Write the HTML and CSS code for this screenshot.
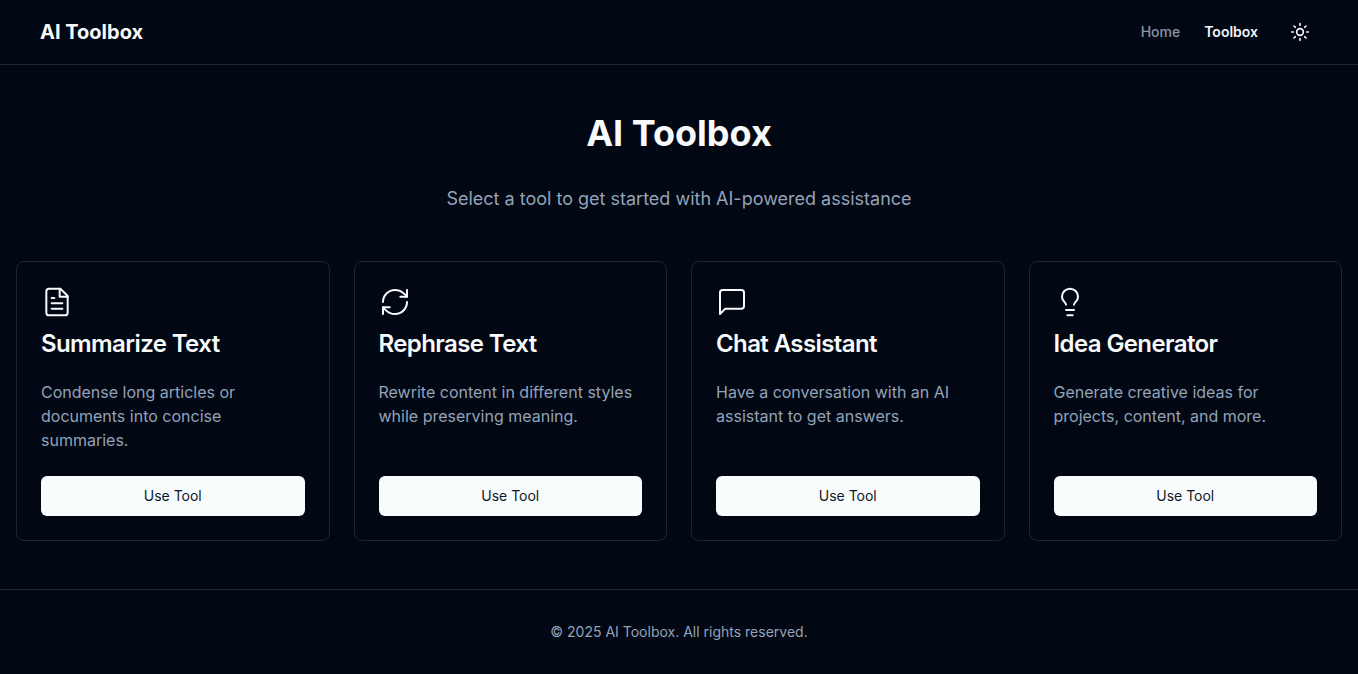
FILE: index.html
```html
<!DOCTYPE html>
<html lang="en">
<head>
<meta charset="utf-8">
<meta name="viewport" content="width=device-width, initial-scale=1">
<title>AI Toolbox</title>
<link rel="stylesheet" href="styles.css">
</head>
<body>
<header class="site-header">
  <a class="brand" href="#">AI Toolbox</a>
  <nav class="nav">
    <a class="nav-link" href="#">Home</a>
    <a class="nav-link active" href="#" aria-current="page">Toolbox</a>
    <button class="theme-toggle" type="button" aria-label="Toggle theme">
      <svg class="icon-small" viewBox="0 0 24 24"><circle cx="12" cy="12" r="4"/><path d="M12 2v2M12 20v2M4.93 4.93l1.41 1.41M17.66 17.66l1.41 1.41M2 12h2M20 12h2M6.34 17.66l-1.41 1.41M19.07 4.93l-1.41 1.41"/></svg>
    </button>
  </nav>
</header>
<main class="main">
  <section class="hero">
    <h1 class="hero-title">AI Toolbox</h1>
    <p class="hero-text">Select a tool to get started with AI-powered assistance</p>
  </section>
  <section class="tools">
    <article class="card">
      <svg class="icon" viewBox="0 0 24 24"><path d="M14.5 2H6a2 2 0 0 0-2 2v16a2 2 0 0 0 2 2h12a2 2 0 0 0 2-2V7.5L14.5 2z"/><path d="M14 2v6h6M10 9H8M16 13H8M16 17H8"/></svg>
      <h2 class="card-title">Summarize Text</h2>
      <p class="card-text">Condense long articles or documents into concise summaries.</p>
      <button class="card-button" type="button">Use Tool</button>
    </article>
    <article class="card">
      <svg class="icon" viewBox="0 0 24 24"><path d="M3 12a9 9 0 0 1 9-9 9.75 9.75 0 0 1 6.74 2.74L21 8"/><path d="M21 3v5h-5"/><path d="M21 12a9 9 0 0 1-9 9 9.75 9.75 0 0 1-6.74-2.74L3 16"/><path d="M8 16H3v5"/></svg>
      <h2 class="card-title">Rephrase Text</h2>
      <p class="card-text">Rewrite content in different styles while preserving meaning.</p>
      <button class="card-button" type="button">Use Tool</button>
    </article>
    <article class="card">
      <svg class="icon" viewBox="0 0 24 24"><path d="M21 15a2 2 0 0 1-2 2H7l-4 4V5a2 2 0 0 1 2-2h14a2 2 0 0 1 2 2z"/></svg>
      <h2 class="card-title">Chat Assistant</h2>
      <p class="card-text">Have a conversation with an AI assistant to get answers.</p>
      <button class="card-button" type="button">Use Tool</button>
    </article>
    <article class="card">
      <svg class="icon" viewBox="0 0 24 24"><path d="M15 14c.2-1 .7-1.7 1.5-2.5 1-.9 1.5-2.2 1.5-3.5A6 6 0 0 0 6 8c0 1 .2 2.2 1.5 3.5.7.7 1.3 1.5 1.5 2.5"/><path d="M9 18h6M10 22h4"/></svg>
      <h2 class="card-title">Idea Generator</h2>
      <p class="card-text">Generate creative ideas for projects, content, and more.</p>
      <button class="card-button" type="button">Use Tool</button>
    </article>
  </section>
</main>
<footer class="site-footer">
  <p class="copyright">© 2025 AI Toolbox. All rights reserved.</p>
</footer>
</body>
</html>
```
FILE: styles.css
```css
* {
  box-sizing: border-box;
  margin: 0;
}

body {
  min-height: 100vh;
  display: flex;
  flex-direction: column;
  background: #010713;
  color: #f8fafc;
  font-family: Inter, sans-serif;
  font-size: 16px;
  line-height: 24px;
}

a {
  color: inherit;
  text-decoration: none;
}

button {
  padding: 0;
  font: inherit;
  border: 0;
  cursor: pointer;
}

svg {
  fill: none;
  stroke: currentColor;
  stroke-linecap: round;
  stroke-linejoin: round;
}

.site-header {
  display: flex;
  align-items: center;
  justify-content: space-between;
  padding: 12px 40px;
  border-bottom: 1px solid #1c2531;
}

.brand {
  font-size: 20px;
  font-weight: 700;
  line-height: 28px;
}

.nav {
  display: flex;
  align-items: center;
  gap: 24px;
}

.nav-link {
  color: #8f96a1;
  font-size: 14px;
  font-weight: 500;
  line-height: 20px;
}

.active {
  color: #f1f5f9;
  font-weight: 600;
}

.theme-toggle {
  display: grid;
  place-items: center;
  width: 36px;
  height: 40px;
  background: transparent;
  color: inherit;
}

.icon-small {
  width: 20px;
  height: 20px;
  stroke-width: 2;
}

.main {
  flex: 1;
  padding: 40px 16px 48px;
}

.hero {
  display: flex;
  flex-direction: column;
  gap: 24px;
  margin-bottom: 48px;
  text-align: center;
}

.hero-title {
  font-size: 36px;
  font-weight: 700;
  line-height: 56px;
}

.hero-text {
  color: #94a3b8;
  font-size: 18px;
  line-height: 28px;
}

.tools {
  display: grid;
  grid-template-columns: repeat(auto-fit, minmax(264px, 1fr));
  gap: 24px;
}

.card {
  display: flex;
  flex-direction: column;
  padding: 24px;
  border: 1px solid #1c2531;
  border-radius: 8px;
}

.icon {
  width: 32px;
  height: 32px;
  stroke-width: 1.5;
}

.card-title {
  margin: 14px 0 24px;
  font-size: 24px;
  font-weight: 600;
  line-height: 24px;
  letter-spacing: -0.6px;
}

.card-text {
  flex: 1;
  margin-bottom: 24px;
  color: #94a3b8;
}

.card-button {
  height: 40px;
  border-radius: 6px;
  background: #f8fcfd;
  color: #0f172a;
  font-size: 14px;
  font-weight: 400;
}

.site-footer {
  padding: 32px 16px;
  border-top: 1px solid #1c2531;
  text-align: center;
}

.copyright {
  color: #94a3b8;
  font-size: 14px;
  line-height: 20px;
}
```
